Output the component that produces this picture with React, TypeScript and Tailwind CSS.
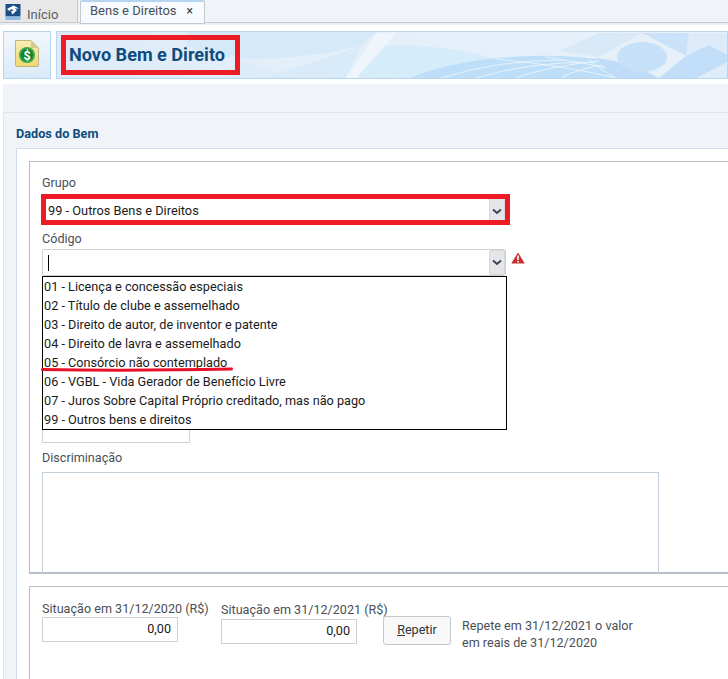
import React from "react";

const items = [
  "01 - Licença e concessão especiais",
  "02 - Título de clube e assemelhado",
  "03 - Direito de autor, de inventor e patente",
  "04 - Direito de lavra e assemelhado",
  "05 - Consórcio não contemplado",
  "06 - VGBL - Vida Gerador de Benefício Livre",
  "07 - Juros Sobre Capital Próprio creditado, mas não pago",
  "99 - Outros bens e direitos",
];

function Chevron() {
  return (
    <svg width="10" height="7" viewBox="0 0 10 7">
      <path d="M1 1.5 L5 5 L9 1.5" fill="none" stroke="#3c4650" strokeWidth="2" />
    </svg>
  );
}

function Logo() {
  return (
    <svg className="mt-px" width="16" height="16" viewBox="0 0 16 16">
      <rect x="0.5" y="0" width="15" height="12.5" fill="#1d4f86" />
      <rect x="0.5" y="12.5" width="15" height="3.5" fill="#8fbce0" />
      <path d="M2 5 L8.5 1.5 L14 4.5 L9.5 4.5 L12 6 L7.5 10.5 L6 7.5 L9 6 L6 5.2 L4.5 7 Z" fill="#ffffff" />
    </svg>
  );
}

function DocIcon() {
  return (
    <svg width="26" height="34" viewBox="0 0 26 34">
      <defs>
        <linearGradient id="doc" x1="0" y1="0" x2="0" y2="1">
          <stop offset="0" stopColor="#f8eeb4" />
          <stop offset="1" stopColor="#efd772" />
        </linearGradient>
      </defs>
      <path d="M2.5 27 H23.5 L22 33 H4 Z" fill="#e3edf6" />
      <path d="M1.5 0.5 H17 L24.5 8 V25 Q24.5 26.5 23 26.5 H3 Q1.5 26.5 1.5 25 Z" fill="url(#doc)" stroke="#bdb684" />
      <path d="M17 0.5 L17 8 L24.5 8 Z" fill="#d6c98a" />
      <circle cx="13" cy="15" r="8" fill="#3aa842" />
      <circle cx="13" cy="15" r="6" fill="#17802c" />
      <text x="13" y="19.5" textAnchor="middle" fontSize="12.5" fontWeight="700" fill="#ffffff" fontFamily="Roboto, sans-serif">$</text>
    </svg>
  );
}

function Banner() {
  return (
    <svg className="absolute inset-0 h-full w-full" viewBox="0 0 671 46" preserveAspectRatio="none">
      <defs>
        <linearGradient id="bg" x1="0" y1="0" x2="1" y2="0">
          <stop offset="0" stopColor="#dce9f8" />
          <stop offset="0.4" stopColor="#e2eef9" />
          <stop offset="1" stopColor="#e6eff9" />
        </linearGradient>
        <pattern id="mesh" width="3" height="3" patternUnits="userSpaceOnUse">
          <path d="M0 0 L3 3" stroke="#ffffff" strokeWidth="0.5" opacity="0.35" />
        </pattern>
      </defs>
      <rect width="671" height="46" fill="url(#bg)" />
      <path d="M130 0 H320 L306 13 Q250 28 186 26 Q160 25 130 14 Z" fill="#d2e8f8" />
      <path d="M170 46 L185 30 L250 46 Z" fill="#d9ebf9" opacity="0.8" />
      <path d="M300 46 L316 13 Q370 12 406 19 Q430 24 450 29 Q395 33 353 46 Z" fill="#d3ebfa" />
      <path d="M205 46 Q260 30 306 13 L289 46 Z" fill="#d6eafa" />
      <path d="M289 46 L320 1 L340 1 L300 46 Z" fill="#edf4fb" />
      <path d="M353 46 Q400 27 473 24 Q560 22 606 46 Z" fill="#b9dcf8" />
      <path d="M385 46 Q440 28 510 28 M420 46 Q470 30 540 30 M460 46 Q490 34 560 27 M505 46 Q520 36 560 31 M440 27 Q510 34 560 46 M490 25 Q550 34 590 46 M530 24 Q540 36 560 46" fill="none" stroke="#e8f3fc" strokeWidth="0.9" />
      <path d="M503 19 L543 1 L586 1 L543 25 Z" fill="#d6e8f8" />
      <path d="M586 1 L633 1 L630 24 Z" fill="#c7e0f8" />
      <path d="M633 1 L671 1 L671 23 L653 13 L630 24 Z" fill="#dbeaf9" />
      <path d="M543 25 L586 3 L630 24 L603 46 L573 46 Z" fill="#e4eff9" />
      <path d="M540 26 Q575 30 603 46 L560 46 Z" fill="#bcd9f8" />
      <ellipse cx="586" cy="25" rx="25" ry="15" fill="#c3dff8" />
      <path d="M630 24 L653 13 L671 23 L671 46 L603 46 Z" fill="#bedcf8" />
      <path d="M640 46 L671 30 L671 46 Z" fill="#dcecfa" />
      <rect width="671" height="46" fill="url(#mesh)" />
    </svg>
  );
}

function SelectBox({ children, plain }: { children?: React.ReactNode; plain?: boolean }) {
  return (
    <div className={`flex items-stretch bg-white ${plain ? "h-[26px] w-[463px]" : "h-[27px] w-[464px] rounded-[2px] border border-[#d0d0d0]"}`}>
      <div className="flex min-w-0 flex-1 items-center pl-[6px] text-[12.8px] text-[#1a1a1a]">{children}</div>
      <div className="flex w-[16px] items-center justify-center rounded-[2px] border border-[#d4d6da] bg-[#e4e6ea]">
        <Chevron />
      </div>
    </div>
  );
}

export default function App() {
  return (
    <div className="relative h-[679px] w-[728px] overflow-hidden bg-white font-['Roboto',sans-serif] text-[12.6px] text-[#3b4248]">
      <div className="flex h-[23px] items-stretch border-b border-[#c3c8cd] bg-[#f0f3f8]">
        <div className="flex w-[78px] items-start gap-[6px] border-r border-[#c3c8cd] bg-[#e8e8e8] pl-[5px] pt-[3px] text-[13px] text-[#5a6066]">
          <Logo />
          <span className="pt-[2px]">Início</span>
        </div>
        <div className="ml-[2px] flex h-[24px] w-[125px] items-center rounded-t-[2px] border border-t-2 border-[#c3c8cd] border-t-[#b4d4ef] bg-[#f7faff] pb-[4px] pl-[9px] text-[13px] text-[#46505a]">
          <span>Bens e Direitos</span>
          <span className="ml-[10px] text-[12px] leading-none text-[#333]">×</span>
        </div>
      </div>
      <div className="h-[2px] bg-[#eceef1]" />
      <div className="flex h-[59px] gap-[5px] bg-white pl-[3px] pt-[6px]">
        <div className="flex h-[48px] w-[48px] justify-center border border-[#b4d4ef] bg-gradient-to-b from-[#f2f7fd] to-[#d9eafa] pt-[8px]">
          <DocIcon />
        </div>
        <div className="relative h-[48px] flex-1 border border-[#b9d6ef]">
          <Banner />
          <h1 className="relative pl-[12px] pt-[12px] text-[18.1px] font-bold leading-[22px] text-[#0d4c7e]">Novo Bem e Direito</h1>
        </div>
      </div>
      <div className="ml-[3px] h-[595px] bg-[#f0f3f8] pt-[28px]">
        <div className="h-full border-t border-l border-[#e1e4e8] pl-[12px] pt-[14px]">
          <h2 className="h-[21px] text-[12.7px] font-bold leading-[14px] text-[#0d4c7e]">Dados do Bem</h2>
          <div className="h-full border-t border-l border-[#cfdbe8] bg-white pl-[12px] pt-[12px]">
            <div className="relative h-[413px] border-t border-l border-b-2 border-[#b5bec6] pl-[12px] pt-[13px]">
              <label className="block h-[16px] leading-[16px] text-[#4a5056]">Grupo</label>
              <div className="mt-[7px]">
                <SelectBox plain>99 - Outros Bens e Direitos</SelectBox>
              </div>
              <label className="mt-[7px] block h-[16px] leading-[16px] text-[#4a5056]">Código</label>
              <div className="mt-[2px] flex items-start gap-[5px]">
                <SelectBox>
                  <span className="-ml-px h-[16px] w-px bg-black" />
                </SelectBox>
                <svg className="mt-[3px]" width="14" height="12" viewBox="0 0 14 12">
                  <path d="M7 0.5 L13.5 11 Q13.5 11.5 13 11.5 H1 Q0.5 11.5 0.5 11 Z" fill="#c8302e" />
                  <rect x="6.2" y="3.5" width="1.6" height="4.5" fill="#fff" />
                  <rect x="6.2" y="9" width="1.6" height="1.5" fill="#fff" />
                </svg>
              </div>
              <div className="mt-[153px] h-[14px] w-[148px] border-x border-b border-[#cdd3d9]" />
              <label className="mt-[7px] block h-[16px] leading-[16px] text-[#4a5056]">Discriminação</label>
              <div className="mt-[6px] h-[102px] w-[617px] border border-b-0 border-[#c3ced8]" />
              <ul className="absolute left-[12px] top-[114px] w-[465px] border border-black bg-white pl-[1px] text-[12.7px] leading-[19px] text-[#1a1a1a]">
                {items.map((t) => (
                  <li key={t} className="h-[19px] whitespace-nowrap">{t}</li>
                ))}
              </ul>
            </div>
            <div className="mt-[12px] flex h-[100px] items-start border-t border-l border-[#b5bec6] pl-[12px] pt-[14px]">
              <div className="w-[179px]">
                <label className="block h-[16px] whitespace-nowrap leading-[16px] text-[#4a5056]">Situação em 31/12/2020 (R$)</label>
                <div className="flex h-[25px] w-[136px] items-center justify-end border border-[#ccd1d6] pr-[6px] text-[#1a1a1a]">0,00</div>
              </div>
              <div className="mt-px w-[162px]">
                <label className="block h-[16px] whitespace-nowrap leading-[16px] text-[#4a5056]">Situação em 31/12/2021 (R$)</label>
                <div className="mt-px flex h-[25px] w-[136px] items-center justify-end border border-[#ccd1d6] pr-[6px] text-[#1a1a1a]">0,00</div>
              </div>
              <button className="mt-[15px] h-[29px] w-[68px] rounded-[3px] border border-[#c3c8cd] bg-[#f8f8f8] text-[#2f353a]">
                <span className="underline">R</span>epetir
              </button>
              <p className="ml-[11px] mt-[16px] w-[220px] whitespace-nowrap leading-[17px] text-[#4a5056]">
                Repete em 31/12/2021 o valor<br />em reais de 31/12/2020
              </p>
            </div>
          </div>
        </div>
      </div>
      <div className="absolute left-[61px] top-[35px] h-[40px] w-[179px] border-[5px] border-[#ed1c24]" />
      <div className="absolute left-[41px] top-[194px] h-[31px] w-[469px] border-[5px] border-[#ed1c24]" />
      <svg className="absolute left-[40px] top-[366px]" width="194" height="7" viewBox="0 0 194 7">
        <path d="M2.5 3.5 Q90 5 191.5 3" fill="none" stroke="#e8102a" strokeWidth="3" strokeLinecap="round" />
      </svg>
    </div>
  );
}
